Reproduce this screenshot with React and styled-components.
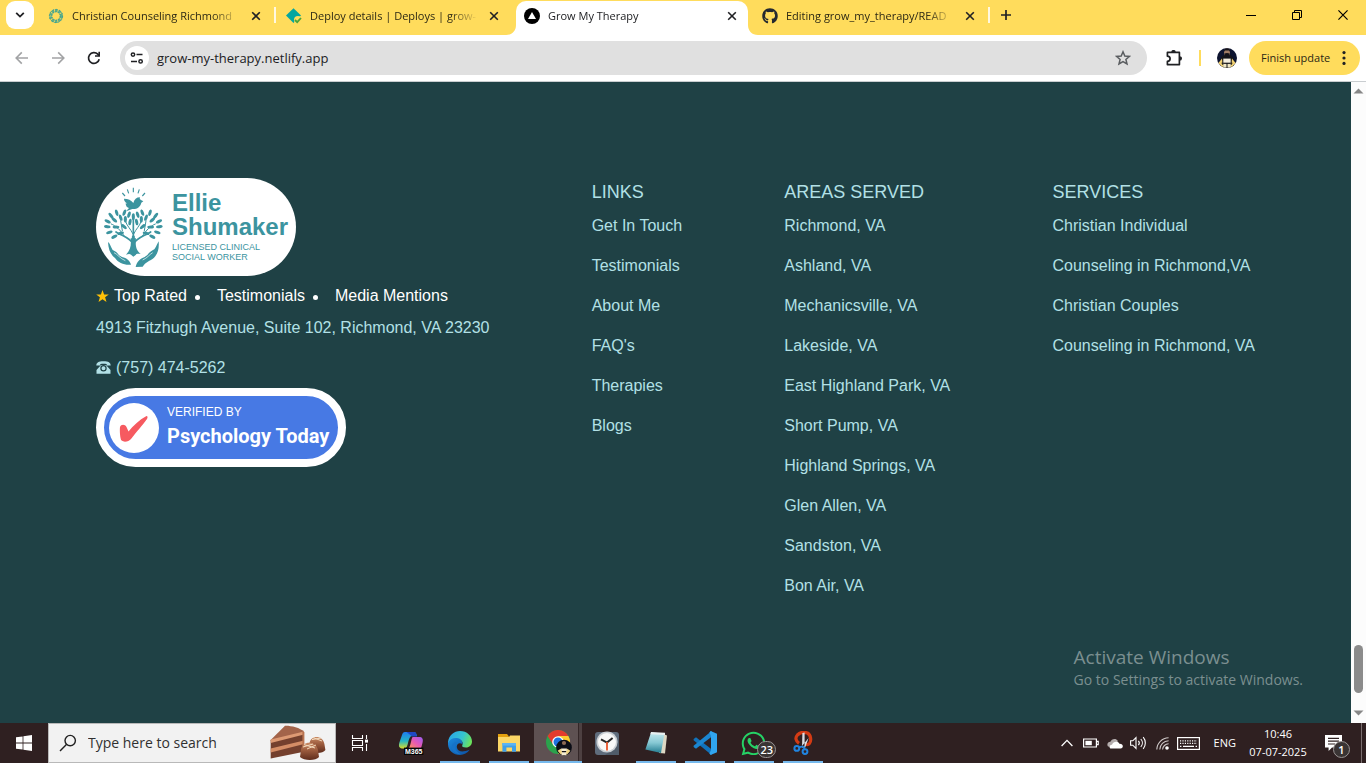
import React from "react";
import styled, { createGlobalStyle, css } from "styled-components";
import { FaGithub, FaWhatsapp } from "react-icons/fa";

const GlobalStyle = createGlobalStyle`
  *, *::before, *::after { box-sizing: border-box; }
  html, body { margin: 0; padding: 0; }
  body { font-family: "Open Sans", "Noto Sans", sans-serif; background: #1f4145; }
  button, input { font-family: inherit; }
  a { color: inherit; text-decoration: none; }
  svg { display: block; flex: none; }
`;

const pageFont = `"Liberation Sans", Arial, sans-serif`;
const yellow = "#ffdc5c";

const Shell = styled.div`
  display: flex;
  flex-direction: column;
  min-height: 100vh;
`;

const IconButton = styled.button`
  display: flex;
  align-items: center;
  justify-content: center;
  flex: none;
  width: ${(p) => p.$w || 16}px;
  height: ${(p) => p.$h || 16}px;
  padding: 0;
  border: 0;
  border-radius: ${(p) => p.$round || 0}px;
  background: ${(p) => p.$bg || "transparent"};
  color: ${(p) => p.$color || "#202124"};
`;

/* ---------- tab strip ---------- */

const TabStrip = styled.header`
  display: flex;
  align-items: flex-start;
  height: 35px;
  background: ${yellow};
`;

const TabSearch = styled.div`
  width: 38px;
  padding: 1px 0 0 6px;
`;

const TabItem = styled.div`
  position: relative;
  display: flex;
  align-items: center;
  flex: 0 1 238px;
  min-width: 0;
  height: 35px;
  padding: 0 15px 4px 10px;
  color: #2c2814;
  ${(p) =>
    p.$active &&
    css`
      color: #202124;
      &::before {
        content: "";
        position: absolute;
        inset: 1px 4px 0 2px;
        border-radius: 10px 10px 0 0;
        background: #fff;
      }
    `}
  ${(p) =>
    p.$divider &&
    css`
      &::after {
        content: "";
        position: absolute;
        right: 0;
        top: 7px;
        width: 2px;
        height: 16px;
        background: #fff8e0;
      }
    `}
`;

const TabFlare = styled.svg`
  position: absolute;
  bottom: 0;
  ${(p) => (p.$side === "left" ? "left: -8px;" : "right: -6px;")}
`;

const TabLink = styled.a`
  position: relative;
  display: flex;
  align-items: center;
  gap: 8px;
  flex: 1;
  min-width: 0;
`;

const TabTitle = styled.span`
  flex: 1;
  min-width: 0;
  overflow: hidden;
  white-space: nowrap;
  font-size: 11px;
  line-height: 16px;
  mask-image: linear-gradient(to right, #000 calc(100% - 28px), transparent);
`;

const TabClose = styled(IconButton)`
  position: relative;
  margin-left: 11px;
`;

const NewTab = styled(IconButton)`
  margin: 6px 0 0 7px;
`;

const WindowButtons = styled.div`
  display: flex;
  margin-left: auto;
`;

/* ---------- toolbar ---------- */

const Toolbar = styled.nav`
  display: flex;
  align-items: center;
  height: 47px;
  padding: 0 6px 0 4px;
  background: #fff;
  border-bottom: 1px solid #c9cdd0;
`;

const AddressBar = styled.form`
  display: flex;
  align-items: center;
  flex: 1;
  min-width: 0;
  height: 34px;
  margin-left: 8px;
  padding: 0 12px 0 5px;
  border-radius: 17px;
  background: #e0e0e0;
`;

const AddressInput = styled.input`
  flex: 1;
  min-width: 0;
  padding: 0 0 0 8px;
  border: 0;
  background: transparent;
  color: #202124;
  font-size: 13px;
  line-height: 20px;
  outline: none;
`;

const Extensions = styled(IconButton)`
  margin-left: 12px;
`;

const ToolbarDivider = styled.span`
  width: 2px;
  height: 16px;
  margin: 0 16px 0 10px;
  background: ${yellow};
`;

const UpdateButton = styled.button`
  display: flex;
  align-items: center;
  justify-content: space-between;
  width: 111px;
  height: 34px;
  margin-left: 12px;
  padding: 0 14px 0 12px;
  border: 0;
  border-radius: 17px;
  background: ${yellow};
  color: #2c2814;
  font-size: 11px;
  line-height: 16px;
`;

/* ---------- page ---------- */

const Viewport = styled.div`
  position: relative;
  display: flex;
  flex: 1;
  background: #1f4145;
`;

const Footer = styled.footer`
  display: flex;
  justify-content: space-between;
  align-items: flex-start;
  flex: 1;
  padding: 96px;
  background: #1f4145;
  color: #b2e0e6;
  font-family: ${pageFont};
  font-size: 16px;
  line-height: 24px;
`;

const Contact = styled.section`
  display: flex;
  flex-direction: column;
  align-items: flex-start;
  gap: 8px;
`;

const Logo = styled.a`
  display: flex;
  gap: 9px;
  width: 200px;
  height: 98px;
  padding: 7px 8px;
  border-radius: 49px;
  background: #fff;
  color: #3c949f;
`;

const LogoText = styled.span`
  display: flex;
  flex-direction: column;
  padding-top: 6px;
`;

const LogoName = styled.span`
  font-size: 24px;
  font-weight: 700;
  line-height: 24px;
`;

const LogoRole = styled.span`
  padding-top: 3px;
  font-size: 9px;
  line-height: 10px;
  white-space: nowrap;
`;

const Highlights = styled.ul`
  display: flex;
  align-items: center;
  margin: 0;
  padding: 0;
  list-style: none;
  color: #fff;
`;

const Highlight = styled.li`
  display: flex;
  align-items: center;
  gap: 5px;
  &:not(:last-child)::after {
    content: "";
    width: 5px;
    height: 5px;
    margin: 2px 17px 0 3px;
    border-radius: 50%;
    background: #fff;
  }
`;

const Address = styled.address`
  display: flex;
  flex-direction: column;
  gap: 16px;
  font-style: normal;
`;

const Phone = styled.a`
  display: flex;
  align-items: center;
  gap: 5px;
`;

const Verified = styled.a`
  display: flex;
  align-items: center;
  gap: 8px;
  width: 250px;
  height: 79px;
  padding-left: 5px;
  border: 8px solid #fff;
  border-radius: 40px;
  background: #4779e4;
  color: #fff;
  overflow: hidden;
`;

const VerifiedText = styled.span`
  display: flex;
  flex-direction: column;
  white-space: nowrap;
`;

const VerifiedBy = styled.span`
  font-size: 12px;
  line-height: 16px;
`;

const VerifiedBrand = styled.span`
  font-family: Roboto, sans-serif;
  font-size: 20px;
  font-weight: 700;
  line-height: 32px;
`;

const Column = styled.section`
  display: flex;
  flex-direction: column;
  gap: 8px;
`;

const ColumnTitle = styled.h2`
  margin: 0;
  font-size: 18px;
  font-weight: 400;
  line-height: 28px;
`;

const ColumnList = styled.ul`
  display: flex;
  flex-direction: column;
  gap: 16px;
  margin: 0;
  padding: 0;
  list-style: none;
  white-space: nowrap;
`;

const Scrollbar = styled.div`
  display: flex;
  flex-direction: column;
  align-items: center;
  width: 15px;
  background: #fcfcfc;
`;

const ScrollThumb = styled.span`
  width: 9px;
  height: 48px;
  margin: auto 0 10px;
  border-radius: 5px;
  background: #8b8b8b;
`;

const Watermark = styled.aside`
  position: absolute;
  right: 63px;
  bottom: 33px;
  color: #7b8f90;
  font-size: 14px;
  line-height: 20px;
  pointer-events: none;
`;

const WatermarkTitle = styled.div`
  font-size: 19px;
  line-height: 26px;
`;

/* ---------- taskbar ---------- */

const Taskbar = styled.footer`
  display: flex;
  height: 40px;
  background: #2f2021;
  color: #fff;
`;

const SearchBox = styled.label`
  display: flex;
  align-items: center;
  flex: 0 1 288px;
  min-width: 0;
  padding: 0 9px 0 10px;
  border: 1px solid #b9b9b9;
  background: #f2f2f2;
`;

const SearchInput = styled.input`
  flex: 1;
  min-width: 0;
  padding: 0 0 0 11px;
  border: 0;
  background: transparent;
  font-size: 14px;
  line-height: 20px;
  outline: none;
  &::placeholder { color: #303030; opacity: 1; }
`;

const Apps = styled.div`
  display: flex;
  margin-left: 2px;
`;

const AppButton = styled.button`
  position: relative;
  display: flex;
  align-items: center;
  justify-content: center;
  width: 49px;
  height: 40px;
  padding: 0;
  border: 0;
  background: transparent;
  ${(p) =>
    p.$running &&
    css`
      &::after {
        content: "";
        position: absolute;
        left: 5px;
        right: 4px;
        bottom: 0;
        height: 2px;
        background: #76b9ed;
      }
    `}
  ${(p) =>
    p.$active &&
    css`
      background: linear-gradient(to right, transparent 1px, #5e5152 1px, #5e5152 45px, #342728 45px, #342728 46px, #4d4041 46px);
      &::after { left: 1px; right: 0; }
    `}
`;

const Tray = styled.div`
  display: flex;
  align-items: center;
  margin-left: auto;
  padding-right: 4px;
`;

const Language = styled.button`
  padding: 0;
  margin: 0 12px 0 11px;
  border: 0;
  background: transparent;
  color: #fff;
  font-size: 11px;
  line-height: 16px;
`;

const Clock = styled.time`
  display: flex;
  flex-direction: column;
  width: 60px;
  font-size: 11px;
  line-height: 18px;
  text-align: center;
`;

const Notifications = styled.button`
  position: relative;
  width: 41px;
  height: 40px;
  margin-left: 13px;
  padding: 0;
  border: 0;
  border-right: 1px solid #7a6e6f;
  background: transparent;
`;

const CountBadge = styled.span`
  position: absolute;
  right: ${(p) => p.$right}px;
  bottom: 5px;
  min-width: 17px;
  height: 17px;
  padding: 0 2px;
  border: 1px solid #9a9494;
  border-radius: 9px;
  background: #3a3434;
  color: #fff;
  font-size: 11px;
  font-weight: 600;
  line-height: 15px;
  text-align: center;
`;

const NotificationGlyph = styled.svg`
  margin: 0 0 0 4px;
`;

/* ---------- icons ---------- */

const Cross = ({ size = 10, width = 1.6 }) => (
  <svg width={size} height={size} viewBox="0 0 10 10" fill="none" stroke="currentColor" strokeWidth={width}>
    <path d="M1.2 1.2L8.8 8.8M8.8 1.2L1.2 8.8" />
  </svg>
);

const SwirlIcon = () => (
  <svg width="16" height="16" viewBox="0 0 16 16" fill="none">
    <circle cx="8" cy="8" r="5.4" stroke="#5fae86" strokeWidth="3" strokeDasharray="2.6 .8" />
    <circle cx="8" cy="8" r="6.6" stroke="#3f9f93" strokeWidth="1" strokeDasharray="1.8 1.6" />
    <circle cx="8" cy="8" r="4.2" stroke="#2f9c9c" strokeWidth="1" strokeDasharray="1.4 1.2" />
  </svg>
);

const DeployIcon = () => (
  <svg width="16" height="16" viewBox="0 0 16 16">
    <path d="M7.5.3L15 7.6L7.5 15L0 7.6Z" fill="#05a6a0" />
    <circle cx="12" cy="12" r="4" fill={yellow} />
    <path d="M9 12L11.2 14.2L15 10" fill="none" stroke="#4aa53a" strokeWidth="1.8" />
  </svg>
);

const VercelIcon = () => (
  <svg width="16" height="16" viewBox="0 0 16 16">
    <circle cx="8" cy="8" r="8" fill="#000" />
    <path d="M8 4L12 11H4Z" fill="#fff" />
  </svg>
);

const Arrow = ({ flip }) => (
  <svg width="14" height="14" viewBox="0 0 14 14" fill="none" stroke="currentColor" strokeWidth="1.6">
    {flip ? <path d="M1 7H12.6M7.2 1.4L12.8 7L7.2 12.6" /> : <path d="M13 7H1.4M6.8 1.4L1.2 7L6.8 12.6" />}
  </svg>
);

const ReloadIcon = () => (
  <svg width="14" height="14" viewBox="0 0 14 14">
    <path d="M12.2 8.2A5.4 5.4 0 1 1 10.8 3.2L12.2 4.8" fill="none" stroke="currentColor" strokeWidth="1.7" />
    <path d="M13 .8V5.8H8V4.2H11.4V.8Z" fill="currentColor" />
  </svg>
);

const TuneIcon = () => (
  <svg width="14" height="12" viewBox="0 0 14 12" fill="none" stroke="#202124" strokeWidth="1.5">
    <circle cx="3" cy="2.6" r="1.7" />
    <path d="M6.5 2.6H12.5M1 9.4H7" />
    <circle cx="10.6" cy="9.4" r="1.7" />
  </svg>
);

const StarOutline = () => (
  <svg width="16" height="16" viewBox="0 0 16 16" fill="none" stroke="#5a5d60" strokeWidth="1.5">
    <path d="M8 1.8L9.8 6L14.4 6.4L10.9 9.4L12 13.9L8 11.5L4 13.9L5.1 9.4L1.6 6.4L6.2 6Z" />
  </svg>
);

const PuzzleIcon = () => (
  <svg width="17" height="17" viewBox="0 0 17 17">
    <path
      d="M1.4 2.4H6H13.4V14.6H1.4V11.4C5 11 5 6.4 1.4 6.2Z"
      fill="none"
      stroke="#202124"
      strokeWidth="1.7"
      strokeLinejoin="round"
    />
    <path d="M5.2 2.4A2.3 2.5 0 0 1 9.8 2.4ZM13.4 6.2A2.6 2.3 0 0 1 13.4 10.8Z" fill="#202124" />
  </svg>
);

const Avatar = () => (
  <svg width="20" height="20" viewBox="0 0 20 20">
    <circle cx="10" cy="10" r="10" fill="#0d1430" />
    <path d="M3.4 17.4L4 9.6L7 6.8H13.2L16.2 9.6L16.8 17.4A10 10 0 0 1 3.4 17.4Z" fill="#15151b" />
    <path d="M1.4 15L5 10.6L7.2 16.6L5.4 19ZM18.6 15L15 10.6L12.8 16.6L14.6 19Z" fill="#f3d373" />
    <rect x="6" y="10.6" width="8" height="4.4" fill="#f5efe0" />
    <rect x="6.2" y="15.6" width="7.6" height="4" fill="#f1e7c4" />
    <path d="M4.6 15.2H15.4M10 15V20M5.8 9V17M14.2 9V17" stroke="#17161a" strokeWidth="1" />
    <ellipse cx="10" cy="4.4" rx="3" ry="3.8" fill="#a07c66" />
    <path d="M6.8 4A3.2 3.6 0 0 1 13.2 4L12 2.4H8ZM7.4 5.4L10 5L12.6 5.4L12 9.6H8Z" fill="#131219" />
  </svg>
);

const KebabIcon = () => (
  <svg width="4" height="16" viewBox="0 0 4 16" fill="#202124">
    <circle cx="2" cy="2.6" r="1.6" />
    <circle cx="2" cy="8" r="1.6" />
    <circle cx="2" cy="13.4" r="1.6" />
  </svg>
);

const leaves = [
  [53, 154, 118], [52, 170, 96], [58, 187, 72], [63, 137, 140], [80, 128, 165],
  [73, 150, 130], [78, 171, 90], [73, 200, 60], [92, 190, 76], [92, 143, 160],
  [103, 128, 20], [106, 148, 0], [117, 134, 16], [120, 156, 10], [102, 170, 130],
];

const TreeLogo = () => (
  <svg width="59" height="83" viewBox="42 45 177 249" fill="currentColor">
    <g stroke="currentColor" strokeWidth="3.4" fill="none">
      <path d="M97 69L105 78M112 58L116 70M130 53V67M148 58L144 70M165 69L157 78" />
    </g>
    <path d="M102 86C114 86 124 90 130 99C133 88 139 82 150 82C148 86 150 88 153 90L160 94L154 98C151 111 141 118 127 117L108 124L117 114C106 110 110 105 106 101L111 100C105 96 102 92 102 86Z" />
    <g fill="none" stroke="currentColor" strokeLinecap="round">
      <path d="M130 245V140" strokeWidth="5" />
      <path d="M130 245V200" strokeWidth="9" />
      <path d="M130 222C118 202 100 200 78 186M130 222C142 202 160 200 182 186" strokeWidth="5" />
      <path d="M129 192C122 176 110 168 106 152M131 192C138 176 150 168 154 152M104 200C90 178 78 168 64 162M156 200C170 178 182 168 196 162M97 182L92 152M163 182L168 152" strokeWidth="3" />
    </g>
    <path d="M122 205H138C136 225 137 240 152 252C144 250 138 251 138 254L130 260L123 254C119 250 114 252 108 254C122 240 124 225 122 205Z" />
    <g>
      {leaves.flatMap(([x, y, a], i) => [
        <ellipse key={`l${i}`} cx={x} cy={y} rx="4.6" ry="10" transform={`rotate(${a} ${x} ${y})`} />,
        <ellipse key={`r${i}`} cx={260 - x} cy={y} rx="4.6" ry="10" transform={`rotate(${-a} ${260 - x} ${y})`} />,
      ])}
      <ellipse cx="130" cy="140" rx="4.6" ry="10" />
    </g>
    <path d="M54 216C60 220 62 230 68 240C76 243 82 248 87 256L96 261C110 264 120 272 123 284C103 286 85 279 75 264C62 254 55 239 54 216Z" />
    <path d="M206 214C208 237 203 251 192 263C180 273 166 276 158 290L137 291C140 276 150 266 164 261L172 255C178 246 186 242 193 238C200 228 202 220 206 214Z" />
    <path d="M72 248C82 252 90 266 106 272M188 248C178 254 172 264 158 270" fill="none" stroke="#fff" strokeWidth="2" />
  </svg>
);

const GoldStar = () => (
  <svg width="13" height="13" viewBox="0 0 13 13" fill="#ffc107">
    <path d="M6.5 0L8.1 4.4H12.8L9.1 7.3L10.5 12L6.5 9.2L2.5 12L3.9 7.3L.2 4.4H4.9Z" />
  </svg>
);

const PhoneIcon = () => (
  <svg width="15" height="14" viewBox="0 0 15 14">
    <path d="M.3 4.4C.4 1.8 2.4 .3 7.5 .3S14.6 1.8 14.7 4.4H10.8V3.2C9 2.6 6 2.6 4.2 3.2V4.4ZM5 4H10L14.5 9V12.8H.5V9Z" fill="currentColor" />
    <circle cx="7.5" cy="7.3" r="2.6" fill="none" stroke="#1f4145" strokeWidth="1.2" />
  </svg>
);

const CheckSeal = () => (
  <svg width="50" height="50" viewBox="0 0 50 50">
    <circle cx="25" cy="25" r="25" fill="#fff" />
    <path d="M11 24C12 21 16 21 17.5 24L19.5 28.5C24 23 30 17 37.5 13C38.5 13 39 14 38 16C33 23 28 28 22 36C20 38.6 15 39.6 12.6 37.6C11 36 10.6 27 11 24Z" fill="#f65a60" />
  </svg>
);

const Triangle = ({ down }) => (
  <svg width="11" height="6" viewBox="0 0 11 6" fill="#878787">
    {down ? <path d="M.5 .5H10.5L5.5 5.6Z" /> : <path d="M.5 5.5H10.5L5.5 .4Z" />}
  </svg>
);

const WindowsIcon = () => (
  <svg width="16" height="16" viewBox="0 0 16 16" fill="#fff">
    <path d="M0 2.3L6.6 1.4V7.6H0ZM7.4 1.3L16 0V7.6H7.4ZM0 8.4H6.6V14.6L0 13.7ZM7.4 8.4H16V16L7.4 14.8Z" />
  </svg>
);

const SearchIcon = () => (
  <svg width="18" height="18" viewBox="0 0 18 18" fill="none" stroke="#202020" strokeWidth="1.4">
    <circle cx="11.2" cy="6.6" r="5.2" />
    <path d="M7.4 10.4L1 17" />
  </svg>
);

const CakeArt = () => (
  <svg width="56" height="36" viewBox="0 0 56 36">
    <defs>
      <linearGradient id="choc" x1="0" y1="0" x2="0" y2="1">
        <stop offset="0" stopColor="#c98a64" />
        <stop offset=".45" stopColor="#9a5a3c" />
        <stop offset="1" stopColor="#5e2c1c" />
      </linearGradient>
    </defs>
    <path d="M.7 15L34 7V26.7L.7 33.6Z" fill="#74402e" />
    <path d="M.7 15L15 .7C20 .4 30 2.4 34 6.7V8L.7 16Z" fill="#a3644a" />
    <path d="M.7 14.6L34 6.4V9.6L.7 18Z" fill="#dd9a74" />
    <path d="M.7 23.6L34 15.4V19L.7 27.4Z" fill="#d48d66" />
    <path d="M32.4 6.6L34.4 7V26.6L32.4 27Z" fill="#b87350" />
    <path d="M39.4 19C40 9.6 53 9.6 54.4 19L55.4 25C53 29 42 29 39.6 25Z" fill="url(#choc)" />
    <path d="M31 25C32 15.4 46 15.4 48 25L49 32C46 36 34 36 30 32Z" fill="url(#choc)" />
    <path d="M33 22L43 19M34 19.6L45 23M37 24L46 20M42 14.6L51 13M43 12.6L52 16" stroke="#f2d9bc" strokeWidth="1" />
  </svg>
);

const TaskViewIcon = () => (
  <svg width="18" height="16" viewBox="0 0 18 16" fill="none" stroke="#fff" strokeWidth="1.1">
    <path d="M1.5 0V3.5H11.5V0M1.5 16V12.5H11.5V16M1.5 5.5H11.5V10.5H1.5ZM15.5 0V4M15.5 9V16" />
    <rect x="14" y="4.6" width="3" height="3" fill="#fff" stroke="none" />
  </svg>
);

const CopilotIcon = () => (
  <svg width="26" height="24" viewBox="0 0 26 24">
    <defs>
      <linearGradient id="cpA" x1="0" y1="0" x2="0" y2="1">
        <stop offset="0" stopColor="#1e7df0" />
        <stop offset=".55" stopColor="#25b5c4" />
        <stop offset="1" stopColor="#d7dd2c" />
      </linearGradient>
      <linearGradient id="cpB" x1="1" y1="0" x2="0" y2="1">
        <stop offset="0" stopColor="#9a5cf4" />
        <stop offset=".5" stopColor="#e759b4" />
        <stop offset="1" stopColor="#ff9654" />
      </linearGradient>
    </defs>
    <path d="M7 1H16C18 1 18.4 3 19 5H14C12 5 11 8 10 12C9 16 8.4 17.4 6 17.4H4C1 17.4 .4 15 1.4 11.6L4 4C4.6 2 5.4 1 7 1Z" fill="url(#cpA)" />
    <path d="M14.6 6H21C24.4 6 25.4 8 24.6 11.4L23 17.4H10.4C12.8 16 13 7.6 14.6 6Z" fill="url(#cpB)" />
    <path d="M8.6 1H16C18 1 18.4 3 19 5.4H14.2Z" fill="#1e48c4" />
    <rect x="6" y="16.6" width="19.4" height="7.4" fill="#050505" />
    <text x="15.7" y="23" fill="#fff" fontFamily="Liberation Sans, sans-serif" fontWeight="700" fontSize="7" textAnchor="middle">M365</text>
  </svg>
);

const EdgeIcon = () => (
  <svg width="24" height="24" viewBox="0 0 24 24">
    <defs>
      <linearGradient id="edA" x1="0" y1=".2" x2="1" y2=".5">
        <stop offset="0" stopColor="#29a5e8" />
        <stop offset=".6" stopColor="#35c4cf" />
        <stop offset="1" stopColor="#6be35c" />
      </linearGradient>
      <linearGradient id="edB" x1="0" y1="0" x2="1" y2="1">
        <stop offset="0" stopColor="#1b8ade" />
        <stop offset="1" stopColor="#0d4fa0" />
      </linearGradient>
    </defs>
    <path d="M0 11C1 4 6 0 12 0C19 0 24 5 24 10.4C24 14 21.4 16.4 18 16.4C15 16.4 13.8 15.4 14.2 14.4C16 11 13 8 9 8C5 8 1.6 10 0 13Z" fill="url(#edA)" />
    <path d="M0 12C1.4 8.4 5 6.6 9 7C12 7.4 14.8 9.6 14.4 13C11 10.8 8 13 9 17C10 21 15 21.4 21.6 18.8C19.4 22 16 24 12 24C5 24 -.4 19 0 12Z" fill="url(#edB)" />
    <path d="M9 11C6 14 6.6 20.6 12.6 23C6 23 2.6 18 4 14.4C5 12 7 11 9 11Z" fill="#1673c8" />
  </svg>
);

const FolderIcon = () => (
  <svg width="22" height="20" viewBox="0 0 22 20">
    <path d="M0 1H9L11 3.4V8H0Z" fill="#e3a00f" />
    <path d="M0 4H11L12 2.4H22V18.4H0Z" fill="#fbd666" />
    <path d="M4.4 18.8V10H18V18.8H14V14.4H8.4V18.8Z" fill="#3f9fe8" />
    <rect x="4.4" y="10" width="13.6" height="2.6" fill="#5cb4f4" />
  </svg>
);

const ChromeIcon = () => (
  <svg width="28" height="26" viewBox="0 0 28 26">
    <g transform="translate(2 0)">
      <circle cx="12" cy="12" r="12" fill="#2ba24c" />
      <path d="M1.6 6A12 12 0 0 1 22.4 6H12L7 14.6Z" fill="#e33b2e" />
      <path d="M12 6H22.4A12 12 0 0 1 12 24L17 15Z" fill="#fccb2e" />
      <circle cx="12" cy="12" r="5.8" fill="#fff" />
      <circle cx="12" cy="12" r="4.5" fill="#1f72e0" />
    </g>
    <g transform="translate(12 9.5) scale(.8)">
      <circle cx="10" cy="10" r="9.8" fill="#0b0d16" />
      <path d="M3 17L5 10H15L17 17A10 10 0 0 1 3 17Z" fill="#15151b" />
      <path d="M2 14L6 11.5L8 16.6L6.4 19ZM18 14L14 11.5L12 16.6L13.6 19Z" fill="#f0d480" />
      <path d="M6.4 11.4H13.6V14.4H6.4ZM7 15.8H13V19.6H7Z" fill="#f5ecd0" />
      <ellipse cx="10" cy="4.4" rx="2.6" ry="2.6" fill="#8d6a54" />
    </g>
  </svg>
);

const AlarmIcon = () => (
  <svg width="24" height="24" viewBox="0 0 24 24">
    <rect y="1" width="24" height="23" rx="3" fill="#5f6c7c" />
    <path d="M24 7V24H10L20 17Z" fill="#505c6a" />
    <circle cx="12" cy="11" r="10.6" fill="#c9ced3" />
    <circle cx="12" cy="11" r="9" fill="#f8f8f8" />
    <path d="M6 8.4L12 11.6L17.6 7" fill="none" stroke="#252525" strokeWidth="2" />
    <path d="M12 11V19.4" stroke="#e8542a" strokeWidth="1.8" />
  </svg>
);

const NotepadIcon = () => (
  <svg width="24" height="24" viewBox="0 0 24 24">
    <defs>
      <linearGradient id="npA" x1="0" y1="0" x2="0" y2="1">
        <stop offset="0" stopColor="#c4e9ee" />
        <stop offset=".5" stopColor="#86c8d4" />
        <stop offset="1" stopColor="#237c90" />
      </linearGradient>
    </defs>
    <path d="M19 3L23 4.6L21 22.6L15 22Z" fill="#ddd8c4" />
    <path d="M7 1.6L20.4 2.4L17 22L1.4 18.4Z" fill="url(#npA)" />
    <path d="M7 1L21 1.8V4L6.4 3.2Z" fill="#e8f0f1" />
  </svg>
);

const CodeIcon = () => (
  <svg width="24" height="24" viewBox="0 0 24 24">
    <path d="M.6 8L3 6.2L18.6 18.2V24L.6 9.2Z" fill="#1172bb" />
    <path d="M.6 16L3 17.8L18.6 5.8V0L.6 14.8Z" fill="#1b86d1" />
    <path d="M17.6 0L24 2.8V21.2L17.6 24L16.4 22.6L18 19V5L16.4 1.4Z" fill="#30a5f0" />
  </svg>
);

const SnipIcon = () => (
  <svg width="20" height="24" viewBox="0 0 20 24" fill="none">
    <path d="M6 12.4C2.6 10 2 6.6 4.4 4C7 1.4 11 .8 14.4 2C18 4 18.6 9.6 16.4 12.4C15.4 13.6 14 13.8 12.6 13" stroke="#d43b14" strokeWidth="3.2" />
    <path d="M9.4 2L11.6 1.6V14.6L9 17ZM15.6 7L8.6 15.6L12 17Z" fill="#dadfe4" />
    <circle cx="3.8" cy="17.4" r="2.4" stroke="#2084e0" strokeWidth="2" />
    <circle cx="12" cy="20.6" r="2.4" stroke="#2084e0" strokeWidth="2" />
    <path d="M5.8 16.4L10 15.4M10.6 15.4L11.6 18.4" stroke="#2084e0" strokeWidth="1.8" />
  </svg>
);

const ChevronUp = () => (
  <svg width="12" height="8" viewBox="0 0 12 8" fill="none" stroke="#fff" strokeWidth="1.3">
    <path d="M.6 7L6 1.4L11.4 7" />
  </svg>
);

const BatteryIcon = () => (
  <svg width="16" height="10" viewBox="0 0 16 10">
    <path d="M.6 1H13.4V9H.6ZM14 3.4H15.2V6.6H14" fill="none" stroke="#fff" strokeWidth="1.2" />
    <rect x="2.4" y="2.8" width="6.4" height="4.4" fill="#fff" />
  </svg>
);

const CloudIcon = () => (
  <svg width="16" height="11" viewBox="0 0 16 11">
    <path d="M1 8.6C-.6 6 1 3.8 3.4 3.8C4.4 .6 9 -.4 11 3L6 9Z" fill="#b4adad" />
    <path d="M4 10.6C1.6 10 2.4 6.6 5 6.8C6 3.4 11 2.6 12.4 5.8C16.4 5.6 17 10 13.6 10.6Z" fill="#fff" />
  </svg>
);

const SpeakerIcon = () => (
  <svg width="17" height="14" viewBox="0 0 17 14" fill="none" stroke="#fff" strokeWidth="1.1">
    <path d="M.6 4.8H2.8L6 1.6V12.4L2.8 9.2H.6ZM8.4 4.8A3.4 3.4 0 0 1 8.4 9.2M10.8 3A6 6 0 0 1 10.8 11M13.2 1.2A9 9 0 0 1 13.2 12.8" />
  </svg>
);

const WifiIcon = () => (
  <svg width="13" height="13" viewBox="0 0 13 13" fill="none" stroke="#cfc9c9" strokeWidth="1.1">
    <path d="M.8 12.6A12 12 0 0 1 12.6 .8M3.8 12.6A9 9 0 0 1 12.6 3.8M6.6 12.6A6 6 0 0 1 12.6 6.8" />
    <circle cx="11" cy="11" r="1.8" fill="#fff" stroke="none" />
  </svg>
);

const KeyboardIcon = () => (
  <svg width="23" height="13" viewBox="0 0 23 13" fill="none" stroke="#fff">
    <rect x=".6" y=".6" width="21.8" height="11.8" strokeWidth="1.2" />
    <path d="M3 3.8H20M3 6.4H20" strokeWidth="1.2" strokeDasharray="1.2 1.2" />
    <path d="M3 9.4H4.4M6 9.4H17M18.6 9.4H20" strokeWidth="1.2" />
  </svg>
);

/* ---------- data ---------- */

const tabs = [
  { title: "Christian Counseling Richmond", icon: <SwirlIcon />, divider: true },
  { title: "Deploy details | Deploys | grow-", icon: <DeployIcon /> },
  { title: "Grow My Therapy", icon: <VercelIcon />, active: true },
  { title: "Editing grow_my_therapy/READ", icon: <FaGithub size={16} color="#24292f" />, divider: true },
];

const columns = [
  { title: "LINKS", items: ["Get In Touch", "Testimonials", "About Me", "FAQ's", "Therapies", "Blogs"] },
  {
    title: "AREAS SERVED",
    items: [
      "Richmond, VA", "Ashland, VA", "Mechanicsville, VA", "Lakeside, VA", "East Highland Park, VA",
      "Short Pump, VA", "Highland Springs, VA", "Glen Allen, VA", "Sandston, VA", "Bon Air, VA",
    ],
  },
  {
    title: "SERVICES",
    items: ["Christian Individual", "Counseling in Richmond,VA", "Christian Couples", "Counseling in Richmond, VA"],
  },
];

const apps = [
  { name: "Microsoft 365", icon: <CopilotIcon /> },
  { name: "Edge", icon: <EdgeIcon />, running: true },
  { name: "File Explorer", icon: <FolderIcon />, running: true },
  { name: "Chrome", icon: <ChromeIcon />, running: true, active: true },
  { name: "Clock", icon: <AlarmIcon /> },
  { name: "Notepad", icon: <NotepadIcon />, running: true },
  { name: "Visual Studio Code", icon: <CodeIcon />, running: true },
  { name: "WhatsApp", icon: <FaWhatsapp size={27} color="#25d366" />, running: true, badge: "23" },
  { name: "Snipping Tool", icon: <SnipIcon />, running: true },
];

export default function App() {
  return (
    <Shell>
      <GlobalStyle />
      <TabStrip>
        <TabSearch>
          <IconButton $w={28} $h={28} $round={9} $bg="#fff" aria-label="Search tabs">
            <svg width="10" height="6" viewBox="0 0 10 6" fill="none" stroke="#202124" strokeWidth="1.8">
              <path d="M1.2 .8L5 4.6L8.8 .8" />
            </svg>
          </IconButton>
        </TabSearch>
        {tabs.map((t) => (
          <TabItem key={t.title} $active={t.active} $divider={t.divider}>
            {t.active && (
              <>
                <TabFlare $side="left" width="10" height="10" viewBox="0 0 10 10">
                  <path d="M10 0V10H0C6 10 10 6 10 0Z" fill="#fff" />
                </TabFlare>
                <TabFlare $side="right" width="10" height="10" viewBox="0 0 10 10">
                  <path d="M0 0V10H10C4 10 0 6 0 0Z" fill="#fff" />
                </TabFlare>
              </>
            )}
            <TabLink href="#">
              {t.icon}
              <TabTitle>{t.title}</TabTitle>
            </TabLink>
            <TabClose $w={10} aria-label="Close tab"><Cross /></TabClose>
          </TabItem>
        ))}
        <NewTab $w={18} $h={18} aria-label="New tab">
          <svg width="10" height="10" viewBox="0 0 10 10" stroke="#202124" strokeWidth="1.7">
            <path d="M5 0V10M0 5H10" />
          </svg>
        </NewTab>
        <WindowButtons>
          <IconButton $w={46} $h={30} aria-label="Minimize">
            <svg width="10" height="10" viewBox="0 0 10 10"><path d="M0 5H10V6H0Z" fill="#000" /></svg>
          </IconButton>
          <IconButton $w={46} $h={30} aria-label="Restore">
            <svg width="10" height="10" viewBox="0 0 10 10" fill="none" stroke="#000">
              <path d="M.5 2.5H7.5V9.5H.5ZM2.5 2.5V.5H9.5V7.5H7.5" />
            </svg>
          </IconButton>
          <IconButton $w={46} $h={30} $color="#000" aria-label="Close"><Cross size={12} width={1} /></IconButton>
        </WindowButtons>
      </TabStrip>

      <Toolbar>
        <IconButton $w={36} $h={34} $color="#a2a3a5" aria-label="Back"><Arrow /></IconButton>
        <IconButton $w={36} $h={34} $color="#a2a3a5" aria-label="Forward"><Arrow flip /></IconButton>
        <IconButton $w={36} $h={34} aria-label="Reload"><ReloadIcon /></IconButton>
        <AddressBar onSubmit={(e) => e.preventDefault()}>
          <IconButton type="button" $w={24} $h={24} $round={12} $bg="#fff" aria-label="Site information"><TuneIcon /></IconButton>
          <AddressInput aria-label="Address" defaultValue="grow-my-therapy.netlify.app" />
          <IconButton type="button" $w={24} $h={24} aria-label="Bookmark"><StarOutline /></IconButton>
        </AddressBar>
        <Extensions $w={30} $h={30} aria-label="Extensions"><PuzzleIcon /></Extensions>
        <ToolbarDivider />
        <IconButton $w={20} $h={20} aria-label="Profile"><Avatar /></IconButton>
        <UpdateButton>
          Finish update
          <KebabIcon />
        </UpdateButton>
      </Toolbar>

      <Viewport>
        <Footer>
          <Contact>
            <Logo href="#">
              <TreeLogo />
              <LogoText>
                <LogoName>Ellie<br />Shumaker</LogoName>
                <LogoRole>LICENSED CLINICAL<br />SOCIAL WORKER</LogoRole>
              </LogoText>
            </Logo>
            <Highlights>
              <Highlight><GoldStar /><a href="#">Top Rated</a></Highlight>
              <Highlight><a href="#">Testimonials</a></Highlight>
              <Highlight><a href="#">Media Mentions</a></Highlight>
            </Highlights>
            <Address>
              <span>4913 Fitzhugh Avenue, Suite 102, Richmond, VA 23230</span>
              <Phone href="tel:7574745262"><PhoneIcon />(757) 474-5262</Phone>
            </Address>
            <Verified href="#">
              <CheckSeal />
              <VerifiedText>
                <VerifiedBy>VERIFIED BY</VerifiedBy>
                <VerifiedBrand>Psychology Today</VerifiedBrand>
              </VerifiedText>
            </Verified>
          </Contact>
          {columns.map((c) => (
            <Column key={c.title}>
              <ColumnTitle>{c.title}</ColumnTitle>
              <ColumnList>
                {c.items.map((i) => (
                  <li key={i}><a href="#">{i}</a></li>
                ))}
              </ColumnList>
            </Column>
          ))}
        </Footer>
        <Scrollbar>
          <IconButton $w={15} $h={18} aria-label="Scroll up"><Triangle /></IconButton>
          <ScrollThumb />
          <IconButton $w={15} $h={20} aria-label="Scroll down"><Triangle down /></IconButton>
        </Scrollbar>
        <Watermark>
          <WatermarkTitle>Activate Windows</WatermarkTitle>
          Go to Settings to activate Windows.
        </Watermark>
      </Viewport>

      <Taskbar>
        <IconButton $w={48} $h={40} aria-label="Start"><WindowsIcon /></IconButton>
        <SearchBox>
          <SearchIcon />
          <SearchInput aria-label="Search" placeholder="Type here to search" />
          <CakeArt />
        </SearchBox>
        <IconButton $w={48} $h={40} aria-label="Task view"><TaskViewIcon /></IconButton>
        <Apps>
          {apps.map((a) => (
            <AppButton key={a.name} aria-label={a.name} $running={a.running} $active={a.active}>
              {a.icon}
              {a.badge && <CountBadge $right={2}>{a.badge}</CountBadge>}
            </AppButton>
          ))}
        </Apps>
        <Tray>
          <IconButton $w={24} $h={40} aria-label="Show hidden icons"><ChevronUp /></IconButton>
          <IconButton $w={24} $h={40} aria-label="Battery"><BatteryIcon /></IconButton>
          <IconButton $w={24} $h={40} aria-label="OneDrive"><CloudIcon /></IconButton>
          <IconButton $w={24} $h={40} aria-label="Volume"><SpeakerIcon /></IconButton>
          <IconButton $w={24} $h={40} aria-label="Network"><WifiIcon /></IconButton>
          <IconButton $w={28} $h={40} aria-label="Touch keyboard"><KeyboardIcon /></IconButton>
          <Language>ENG</Language>
          <Clock dateTime="2025-07-07T10:46">
            <span>10:46</span>
            <span>07-07-2025</span>
          </Clock>
          <Notifications aria-label="Notifications">
            <NotificationGlyph width="17" height="16" viewBox="0 0 17 16">
              <path d="M0 0H17V12.6H7L3.6 16V12.6H0Z" fill="#fff" />
              <path d="M3 3.4H14M3 6.2H14M3 9H10" stroke="#2f2021" strokeWidth="1.2" />
            </NotificationGlyph>
            <CountBadge $right={11}>1</CountBadge>
          </Notifications>
        </Tray>
      </Taskbar>
    </Shell>
  );
}
